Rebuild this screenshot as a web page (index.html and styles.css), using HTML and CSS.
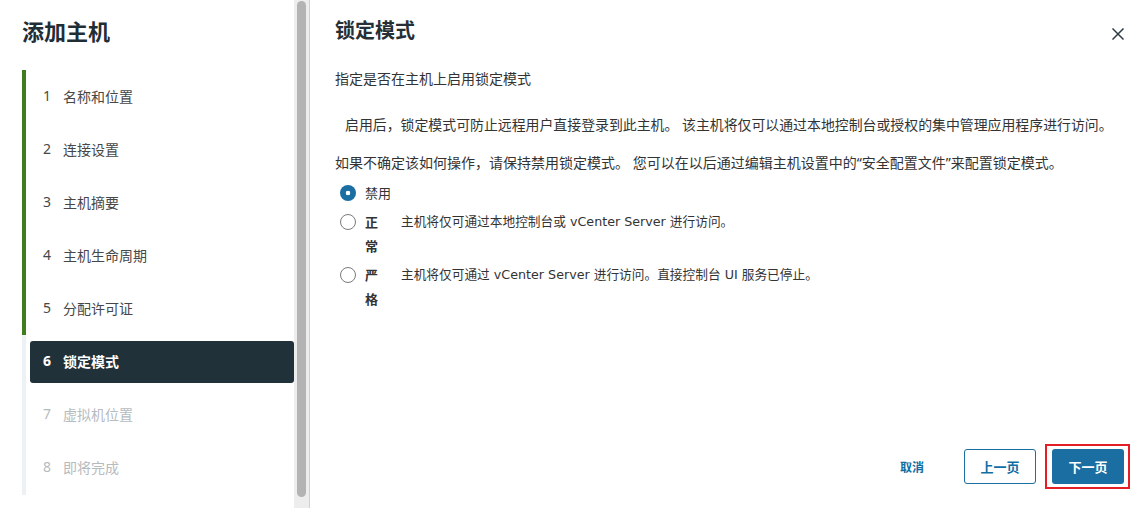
FILE: index.html
```html
<!DOCTYPE html>
<html lang="zh-CN">
<head>
<meta charset="utf-8">
<title>添加主机</title>
<link rel="stylesheet" href="styles.css">
</head>
<body>
<div class="wizard">
  <aside class="sidebar">
    <div class="side-content">
      <h1 class="wiz-title">添加主机</h1>
      <ol class="steps">
        <li class="step done"><div class="step-btn"><span class="num">1</span><span>名称和位置</span></div></li>
        <li class="step done"><div class="step-btn"><span class="num">2</span><span>连接设置</span></div></li>
        <li class="step done"><div class="step-btn"><span class="num">3</span><span>主机摘要</span></div></li>
        <li class="step done"><div class="step-btn"><span class="num">4</span><span>主机生命周期</span></div></li>
        <li class="step done"><div class="step-btn"><span class="num">5</span><span>分配许可证</span></div></li>
        <li class="step todo"><div class="step-btn active"><span class="num">6</span><span>锁定模式</span></div></li>
        <li class="step todo disabled"><div class="step-btn"><span class="num">7</span><span>虚拟机位置</span></div></li>
        <li class="step todo disabled last"><div class="step-btn"><span class="num">8</span><span>即将完成</span></div></li>
      </ol>
    </div>
    <div class="scrollbar"><div class="thumb"></div></div>
  </aside>
  <main class="content">
    <header class="content-head">
      <h2 class="page-title">锁定模式</h2>
      <button class="close" aria-label="关闭">
        <svg width="12" height="12" viewBox="0 0 12 12"><path d="M1 1 L11 11 M11 1 L1 11" stroke="#2f3b44" stroke-width="1.5" fill="none" stroke-linecap="square"/></svg>
      </button>
    </header>
    <div class="body">
      <p class="lead">指定是否在主机上启用锁定模式</p>
      <p class="note">启用后，锁定模式可防止远程用户直接登录到此主机。 该主机将仅可以通过本地控制台或授权的集中管理应用程序进行访问。</p>
      <p class="hint">如果不确定该如何操作，请保持禁用锁定模式。 您可以在以后通过编辑主机设置中的“安全配置文件”来配置锁定模式。</p>
      <div class="radios">
        <div class="radio-row">
          <span class="radio checked"></span>
          <span class="radio-label">禁用</span>
        </div>
        <div class="radio-row">
          <span class="radio"></span>
          <span class="radio-label strong narrow">正常</span>
          <span class="radio-desc">主机将仅可通过本地控制台或 vCenter Server 进行访问。</span>
        </div>
        <div class="radio-row">
          <span class="radio"></span>
          <span class="radio-label strong narrow">严格</span>
          <span class="radio-desc">主机将仅可通过 vCenter Server 进行访问。直接控制台 UI 服务已停止。</span>
        </div>
      </div>
    </div>
    <footer class="actions">
      <button class="btn btn-link">取消</button>
      <button class="btn btn-outline">上一页</button>
      <button class="btn btn-primary highlighted">下一页</button>
    </footer>
  </main>
</div>
</body>
</html>
```
FILE: styles.css
```css
html, body {
  margin: 0;
  padding: 0;
  background: #ffffff;
}

body {
  width: 1147px;
  height: 508px;
  overflow: hidden;
  font-family: "Noto Sans", "Noto Sans CJK SC", sans-serif;
  color: #333333;
}

.wizard {
  display: flex;
  height: 508px;
}

/* ---------- sidebar ---------- */
.sidebar {
  display: flex;
  width: 310px;
  flex-shrink: 0;
  border-right: 1px solid #cdd1d4;
  box-sizing: border-box;
}

.side-content {
  width: 294px;
  box-sizing: border-box;
  padding: 17px 0 0 22px;
}

.wiz-title {
  margin: 0;
  font-size: 22px;
  line-height: 28px;
  font-weight: 600;
  color: #1f2d35;
}

.steps {
  list-style: none;
  margin: 25px 0 0;
  padding: 0;
}

.step {
  border-left: 4px solid #3f7d1e;
  padding: 6px 0 5px 4px;
}

.step.todo {
  border-left-color: #ebf1f4;
}

.step.last {
  padding-bottom: 6px;
}

.step-btn {
  display: flex;
  align-items: center;
  height: 42px;
  box-sizing: border-box;
  padding: 0 0 3px 13px;
  border-radius: 3px;
  font-size: 14px;
  color: #474747;
}

.num {
  width: 20px;
}

.step-btn.active {
  background: #21313a;
  color: #ffffff;
  font-weight: 700;
}

.disabled .step-btn {
  color: #b6bbbe;
}

.scrollbar {
  width: 15px;
  background: #ededed;
  padding: 1px 0 0 3px;
  box-sizing: border-box;
}

.thumb {
  width: 9px;
  height: 496px;
  border-radius: 5px;
  background: #b3b3b3;
}

/* ---------- content ---------- */
.content {
  flex: 1;
  display: flex;
  flex-direction: column;
  padding: 19px 23px 24px 25px;
  box-sizing: border-box;
}

.content-head {
  display: flex;
  justify-content: space-between;
  align-items: flex-start;
}

.page-title {
  margin: 0;
  font-size: 20px;
  line-height: 24px;
  font-weight: 600;
  color: #262f36;
}

.close {
  border: 0;
  background: transparent;
  padding: 0;
  margin-top: 9px;
  width: 12px;
  height: 12px;
  display: flex;
}

.body p {
  margin: 0;
  font-size: 14px;
  line-height: 20px;
}

.body .lead {
  margin-top: 26px;
}

.body .note {
  margin-top: 26px;
  padding-left: 10px;
  font-size: 13.9px;
}

.body .hint {
  margin-top: 18px;
}

.radios {
  margin-top: 8px;
  padding-left: 5px;
}

.radio-row {
  display: flex;
  align-items: flex-start;
  line-height: 24px;
  margin-bottom: 5px;
}

.radio {
  width: 16px;
  height: 16px;
  margin-top: 4px;
  border-radius: 50%;
  border: 1px solid #7a7a7a;
  box-sizing: border-box;
  background: #ffffff;
  flex-shrink: 0;
}

.radio.checked {
  border: 0;
  background: radial-gradient(circle, #ffffff 0 2px, #1a6ea1 2.6px);
}

.radio-label {
  margin-left: 9px;
  font-size: 13px;
}

.radio-label.strong {
  font-weight: 700;
}

.radio-label.narrow {
  width: 14px;
  flex-shrink: 0;
}

.radio-desc {
  margin-left: 22px;
  font-family: "DejaVu Sans", "Noto Sans CJK SC", sans-serif;
  font-size: 12.7px;
  color: #333333;
}

/* ---------- footer ---------- */
.actions {
  margin-top: auto;
  display: flex;
  justify-content: flex-end;
  align-items: center;
}

.btn {
  height: 35px;
  min-width: 72px;
  box-sizing: border-box;
  border-radius: 3px;
  font-family: inherit;
  font-size: 13px;
  font-weight: 600;
  padding: 0 12px;
  cursor: pointer;
}

.btn-link {
  min-width: 0;
  width: 48px;
  padding: 0;
  border: 0;
  background: transparent;
  color: #106ea3;
  margin-right: 28px;
  font-size: 12px;
}

.btn-outline {
  border: 1px solid #1b6fa2;
  background: #ffffff;
  color: #106ea3;
  margin-right: 16px;
}

.btn-primary {
  border: 0;
  background: #1a6ea1;
  color: #ffffff;
}

.highlighted {
  position: relative;
}

.highlighted::after {
  content: "";
  position: absolute;
  left: -7px;
  right: -6px;
  top: -5px;
  bottom: -5px;
  border: 2px solid #e31e24;
  pointer-events: none;
}
```
